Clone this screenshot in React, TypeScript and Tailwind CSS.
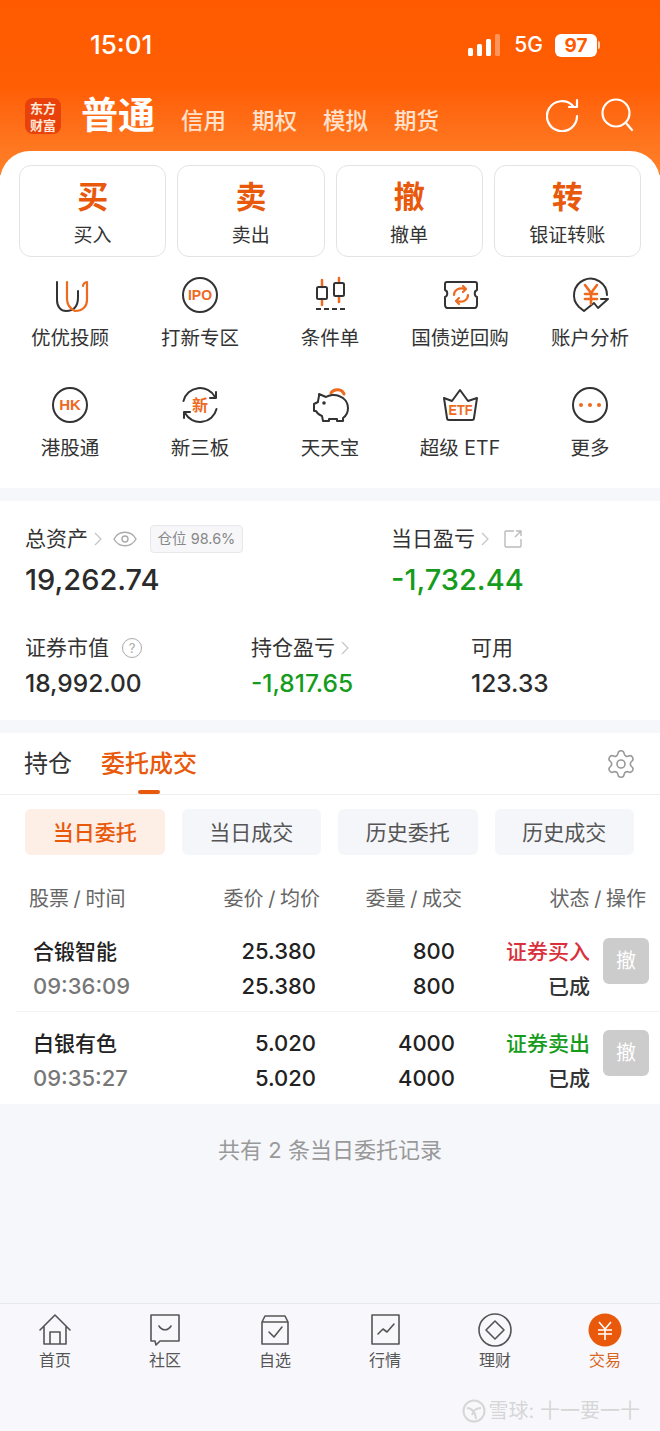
import { ReactNode } from 'react'
import { Settings } from 'lucide-react'

const orange = '#e8590c'

const stroke = { fill: 'none', stroke: '#333', strokeWidth: 2, strokeLinecap: 'round' as const, strokeLinejoin: 'round' as const }
const accent = { fill: 'none', stroke: '#ee6a1f', strokeWidth: 2.2, strokeLinecap: 'round' as const, strokeLinejoin: 'round' as const }

function Icon({ children }: { children: ReactNode }) {
  return (
    <svg viewBox="0 0 40 40" className="w-10 h-10">
      {children}
    </svg>
  )
}

const BadgeText = ({ children, size = 13 }: { children: string; size?: number }) => (
  <text x="20" y="20" dy="0.36em" textAnchor="middle" fontSize={size} fontWeight="700" fill="#ee6a1f" fontFamily="'Liberation Sans', 'Noto Sans CJK SC', sans-serif">
    {children}
  </text>
)

const menuIcons: Record<string, ReactNode> = {
  u: (
    <Icon>
      <path d="M7 7v18c0 7 4 11 9 11 7 0 12-4 12-14v-6" {...stroke} />
      <path d="M17 7v17c0 6 4 10 8 12 8 0 12-5 12-11V7c-2 0-4 2-4 4" {...accent} />
    </Icon>
  ),
  ipo: (
    <Icon>
      <circle cx="20" cy="20" r="17" {...stroke} />
      <BadgeText size={14}>IPO</BadgeText>
    </Icon>
  ),
  cond: (
    <Icon>
      <path d="M12 5v7M12 24v6M29 3v5M29 21v6" {...accent} strokeWidth={2.5} />
      <rect x="7" y="12" width="10" height="12" rx="1.500" {...stroke} />
      <rect x="24" y="8" width="10" height="13" rx="1.500" {...stroke} />
      <path d="M6 34h30" {...stroke} strokeDasharray="5 3" strokeLinecap="butt" />
    </Icon>
  ),
  bond: (
    <Icon>
      <path d="M7 7h28c1 0 2 1 2 2v6c-3 1-3 6 0 7v8c0 1-1 3-2 3H7c-1 0-2-2-2-3v-8c3-1 3-6 0-7V9c0-1 1-2 2-2z" {...stroke} />
      <path d="M14 20c0-5 5-8 11-6M28 20c0 5-5 8-11 6" {...accent} />
      <path d="M23 11l3 3-3 3M19 23l-3 3 3 3" {...accent} />
    </Icon>
  ),
  account: (
    <Icon>
      <path d="M37 20A16.500 16.500 0 1 0 9 32l5 4 10-8 4 5 10-9h-7" {...stroke} />
      <path d="M15 10l6 8 6-8M21 18v11M15 19h12M15 24h12" {...accent} strokeWidth={2.6} />
    </Icon>
  ),
  hk: (
    <Icon>
      <circle cx="20" cy="20" r="17" {...stroke} />
      <BadgeText size={15}>HK</BadgeText>
    </Icon>
  ),
  three: (
    <Icon>
      <path d="M3.500 16A17 17 0 0 1 35 12M36.500 24A17 17 0 0 1 5 28" {...stroke} />
      <path d="M36 7v6h-6M4 33v-6h6" {...stroke} />
      <BadgeText size={16}>新</BadgeText>
    </Icon>
  ),
  pig: (
    <Icon>
      <path d="M21 8a7 6 0 0 1 13 1" {...accent} strokeWidth={3} />
      <path d="M9 9l7 3c3-2 9-3 13-1 6 2 9 7 9 12 0 4-2 8-5 10v3h-6v-2h-8v2h-6l-1-5c-3-1-5-3-6-5H4v-7l4-2c0-2 1-5 1-6z" {...stroke} />
      <circle cx="14" cy="18" r="1.800" fill="#333" />
    </Icon>
  ),
  etf: (
    <Icon>
      <path d="M4 13l8 3 8-11 8 11 9-3-3 20c0 1-1 2-2 2H9c-1 0-2-1-2-2z" {...stroke} />
      <text x="20.500" y="30" textAnchor="middle" fontSize="15" fontWeight="700" fill="#ee6a1f" textLength={24} lengthAdjust="spacingAndGlyphs" fontFamily="'Liberation Sans', sans-serif">
        ETF
      </text>
    </Icon>
  ),
  more: (
    <Icon>
      <circle cx="20" cy="20" r="17" {...stroke} />
      <circle cx="11" cy="20" r="2" fill="#ee6a1f" />
      <circle cx="20" cy="20" r="2" fill="#ee6a1f" />
      <circle cx="29" cy="20" r="2" fill="#ee6a1f" />
    </Icon>
  ),
}

const actions = [
  { big: '买', small: '买入' },
  { big: '卖', small: '卖出' },
  { big: '撤', small: '撤单' },
  { big: '转', small: '银证转账' },
]

const menus = [
  { icon: 'u', label: '优优投顾' },
  { icon: 'ipo', label: '打新专区' },
  { icon: 'cond', label: '条件单' },
  { icon: 'bond', label: '国债逆回购' },
  { icon: 'account', label: '账户分析' },
  { icon: 'hk', label: '港股通' },
  { icon: 'three', label: '新三板' },
  { icon: 'pig', label: '天天宝' },
  { icon: 'etf', label: '超级 ETF' },
  { icon: 'more', label: '更多' },
]

const orders = [
  { name: '合锻智能', time: '09:36:09', price: '25.380', qty: '800', type: '证券买入', typeClass: 'text-[#d9303c]' },
  { name: '白银有色', time: '09:35:27', price: '5.020', qty: '4000', type: '证券卖出', typeClass: 'text-[#169c1c]' },
]

const Chevron = () => (
  <svg viewBox="0 0 8 14" className="w-2 h-3.5 ml-1.5">
    <path d="M1 1l6 6-6 6" fill="none" stroke="#c4c4c4" strokeWidth="1.2" />
  </svg>
)

const navLine = { fill: 'none', stroke: '#555', strokeWidth: 1.6, strokeLinejoin: 'round' as const, strokeLinecap: 'round' as const }

const navItems: { label: string; active?: boolean; icon: ReactNode }[] = [
  {
    label: '首页',
    icon: <path d="M3 17L18 2l15 15M7 14v17h22V14M13 31V19h10v12" {...navLine} />,
  },
  {
    label: '社区',
    icon: <path d="M4 2h28v26H13l-4 4-1-4H4zM12 13c3 5 9 5 12 0" {...navLine} />,
  },
  {
    label: '自选',
    icon: <path d="M5 9l3-6h20l3 6M5 9h26v22H5zM12 19l5 5 8-10" {...navLine} />,
  },
  {
    label: '行情',
    icon: <path d="M5 2h27v29H5zM11 21l5-5 4 3 7-8" {...navLine} />,
  },
  {
    label: '理财',
    icon: (
      <>
        <circle cx="18" cy="17" r="16" {...navLine} />
        <path d="M18 8l9 9-9 9-9-9z" {...navLine} />
      </>
    ),
  },
  {
    label: '交易',
    active: true,
    icon: (
      <>
        <circle cx="18" cy="17" r="16.500" fill={orange} />
        <path d="M12 9l6 7 6-7M18 16v11M11 17h14M11 21h14" fill="none" stroke="#fff" strokeWidth="1.6" />
      </>
    ),
  },
]

export default function App() {
  return (
    <div
      className="w-[660px] h-[1431px] overflow-hidden bg-[#f5f7fb] text-[#333] flex flex-col"
      style={{ fontFamily: "Inter, 'Noto Sans CJK SC', sans-serif" }}
    >
      {/* 顶部 */}
      <div className="h-[175px] shrink-0 bg-gradient-to-b from-[#ff5a00] via-[#ff5e04] to-[#ff8128] text-white">
        <div className="h-[90px] pt-[29px] pl-[90px] pr-[60px] flex items-start justify-between">
          <span className="text-[26px] leading-[32px] font-medium">15:01</span>
          <div className="flex items-center h-[32px]">
            <svg viewBox="0 0 32 22" className="w-8 h-[22px] mr-[14px]">
              <rect x="0" y="14" width="5" height="8" rx="1.500" fill="#fff" />
              <rect x="9" y="10" width="5" height="12" rx="1.500" fill="#fff" />
              <rect x="18" y="5" width="5" height="17" rx="1.500" fill="#fff" />
              <rect x="27" y="0" width="5" height="22" rx="1.500" fill="#fff" fillOpacity="0.35" />
            </svg>
            <span className="text-[21px] font-medium mr-[12px]">5G</span>
            <span className="w-[42px] h-[23px] bg-white rounded-[6px] text-[#ff5a00] text-[19px] leading-[23px] font-bold text-center">97</span>
            <span className="w-[2px] h-[8px] bg-white/70 rounded-r ml-[1px]" />
          </div>
        </div>
        <div className="flex items-end pl-[25px] pr-[26px] h-[46px]">
          <div
            className="w-[36px] h-[36px] rounded-[8px] bg-[#e8410c] text-[#ffe9d8] text-[13px] font-bold flex items-center justify-center mb-[2px]"
            style={{ fontFamily: "'Noto Sans CJK SC', serif" }}
          >
            <div className="text-center leading-[17px]">
              <div>东方</div>
              <div>财富</div>
            </div>
          </div>
          <span className="ml-[20px] text-[37px] leading-[44px] font-bold mb-[-2px]">普通</span>
          <div className="ml-[26px] flex gap-[26px] text-[22.5px] leading-[34px] font-medium text-[#ffe1cc] mb-[-2px]">
            <span>信用</span>
            <span>期权</span>
            <span>模拟</span>
            <span>期货</span>
          </div>
          <div className="ml-auto flex items-center gap-[20px] mb-[4px]">
            <svg viewBox="0 0 34 34" className="w-[34px] h-[34px]">
              <path d="M27 8a15 15 0 1 0 4 10" fill="none" stroke="#fff" strokeWidth="2.2" strokeLinecap="round" />
              <path d="M31 2v7h-8" fill="none" stroke="#fff" strokeWidth="2.2" strokeLinecap="round" strokeLinejoin="round" />
            </svg>
            <svg viewBox="0 0 34 34" className="w-[34px] h-[34px]">
              <circle cx="16" cy="15" r="13.500" fill="none" stroke="#fff" strokeWidth="2.2" />
              <path d="M26 25l6 7" fill="none" stroke="#fff" strokeWidth="2.2" strokeLinecap="round" />
            </svg>
          </div>
        </div>
      </div>

      {/* 快捷操作 */}
      <div className="relative mt-[-24px] bg-white rounded-t-[30px] pt-[14px] h-[337px] shrink-0">
        <div className="grid grid-cols-4 gap-[11px] pl-[19px] pr-[19px]">
          {actions.map((a) => (
            <div key={a.big} className="h-[92px] rounded-[12px] border border-[#e3e3e3] flex flex-col items-center pt-[10px]">
              <span className="text-[31px] leading-[42px] font-bold text-[#e8590c]">{a.big}</span>
              <span className="mt-[4px] text-[19px] leading-[28px] text-[#333]">{a.small}</span>
            </div>
          ))}
        </div>
        <div className="grid grid-cols-5 pl-[5px] pr-[5px] mt-[18px] gap-y-[50px]">
          {menus.map((m) => (
            <div key={m.label} className="h-[60px] flex flex-col items-center">
              <div className="h-[40px]">{menuIcons[m.icon]}</div>
              <span className="mt-[9px] text-[19.5px] leading-[28px] whitespace-nowrap">{m.label}</span>
            </div>
          ))}
        </div>
      </div>

      {/* 资产 */}
      <div className="mt-[13px] h-[219px] shrink-0 bg-white pl-[25px] pt-[24px]">
        <div className="flex">
          <div className="w-[366px]">
            <div className="flex items-center h-[28px] text-[21px] text-[#333]">
              总资产
              <Chevron />
              <svg viewBox="0 0 24 16" className="w-6 h-4 ml-[11px]">
                <path d="M1 8c5-9 17-9 22 0-5 9-17 9-22 0z" fill="none" stroke="#aaa" strokeWidth="1.4" />
                <circle cx="12" cy="8" r="3" fill="none" stroke="#aaa" strokeWidth="1.4" />
              </svg>
              <span className="ml-[13px] h-[28px] w-[93px] rounded-[4px] border border-[#e8e8ec] bg-[#f7f7fa] text-[14.5px] leading-[26px] text-center text-[#888]">
                仓位 98.6%
              </span>
            </div>
            <div className="mt-[9px] text-[29px] leading-[36px] font-medium text-[#2b2b2b]">19,262.74</div>
          </div>
          <div>
            <div className="flex items-center h-[28px] text-[21px] text-[#333]">
              当日盈亏
              <Chevron />
              <svg viewBox="0 0 18 18" className="w-[18px] h-[18px] ml-[15px]">
                <path d="M10 1H2a1 1 0 0 0-1 1v14a1 1 0 0 0 1 1h14a1 1 0 0 0 1-1V9M11 7l6-6M12 1h5v5" fill="none" stroke="#bbb" strokeWidth="1.4" />
              </svg>
            </div>
            <div className="mt-[9px] text-[29px] leading-[36px] font-medium text-[#169c1c]">-1,732.44</div>
          </div>
        </div>
        <div className="flex mt-[36px]">
          <div className="w-[226px]">
            <div className="flex items-center h-[28px] text-[21px]">
              证券市值
              <span className="ml-[13px] w-[20px] h-[20px] rounded-full border border-[#aaa] text-[13px] leading-[18px] text-center text-[#aaa]">?</span>
            </div>
            <div className="mt-[4px] text-[24.5px] leading-[34px] font-medium text-[#2b2b2b]">18,992.00</div>
          </div>
          <div className="w-[220px]">
            <div className="flex items-center h-[28px] text-[21px]">
              持仓盈亏
              <Chevron />
            </div>
            <div className="mt-[4px] text-[24.5px] leading-[34px] font-medium text-[#169c1c]">-1,817.65</div>
          </div>
          <div>
            <div className="h-[28px] text-[21px] leading-[28px]">可用</div>
            <div className="mt-[4px] text-[24.5px] leading-[34px] font-medium text-[#2b2b2b]">123.33</div>
          </div>
        </div>
      </div>

      {/* 委托 */}
      <div className="mt-[13px] h-[371px] shrink-0 bg-white">
        <div className="relative h-[62px] flex items-center pl-[24px] pr-[23px] border-b border-[#eeeeee] text-[24px]">
          <span>持仓</span>
          <span className="ml-[29px] font-medium text-[#e8590c]">委托成交</span>
          <span className="absolute left-[138px] bottom-0 w-[22px] h-[4px] rounded-full bg-[#e8590c]" />
          <Settings className="ml-auto text-[#999]" size={32} strokeWidth={1.2} />
        </div>
        <div className="mt-[14px] pl-[25px] pr-[26px] grid grid-cols-4 gap-[17px]">
          {['当日委托', '当日成交', '历史委托', '历史成交'].map((t, i) => (
            <div
              key={t}
              className={`h-[46px] rounded-[6px] text-[21px] leading-[48px] text-center ${
                i === 0 ? 'bg-[#fdeee6] text-[#e8590c] font-medium' : 'bg-[#f5f6fa] text-[#555]'
              }`}
            >
              {t}
            </div>
          ))}
        </div>
        <div className="mt-[30px] flex text-[20px] leading-[28px] text-[#666] [word-spacing:-1px]">
          <span className="w-[320px] pl-[29px] flex justify-between">
            <span>股票 / 时间</span>
            <span>委价 / 均价</span>
          </span>
          <span className="w-[142px] text-right">委量 / 成交</span>
          <span className="w-[184px] text-right">状态 / 操作</span>
        </div>
        <div className="mt-[7px]">
          {orders.map((o, i) => (
            <div key={o.name} className={`h-[92px] ml-[16px] flex text-[22px] leading-[35px] ${i === 0 ? 'border-b border-[#f4f4f4]' : ''}`}>
              <div className="w-[300px] pl-[17px] pt-[14px] flex justify-between">
                <div>
                  <div className="text-[21px] text-[#222] font-medium">{o.name}</div>
                  <div className="text-[#777] font-medium">{o.time}</div>
                </div>
                <div className="text-right text-[#222] font-medium">
                  <div>{o.price}</div>
                  <div>{o.price}</div>
                </div>
              </div>
              <div className="w-[139px] pt-[14px] text-right text-[#222] font-medium">
                <div>{o.qty}</div>
                <div>{o.qty}</div>
              </div>
              <div className="w-[135px] pt-[14px] text-right text-[21px] font-medium text-[#333]">
                <div className={o.typeClass}>{o.type}</div>
                <div>已成</div>
              </div>
              <div className="ml-[13px] mt-[18px] w-[46px] h-[46px] rounded-[6px] bg-[#cccccc] text-white text-[20px] leading-[46px] text-center">
                撤
              </div>
            </div>
          ))}
        </div>
      </div>

      {/* 记录数 */}
      <div className="h-[199px] shrink-0 pt-[30px] text-center text-[22px] leading-[32px] text-[#999]">共有 2 条当日委托记录</div>

      {/* 底部导航 */}
      <div className="relative flex-1 bg-[#f8f8fc] border-t border-[#e8e8ea]">
        <div className="grid grid-cols-6 pt-[9px]">
          {navItems.map((n) => (
            <div key={n.label} className="flex flex-col items-center">
              <svg viewBox="0 0 36 34" className="w-9 h-[34px]">
                {n.icon}
              </svg>
              <span className={`mt-[2px] text-[16px] leading-[22px] ${n.active ? 'text-[#d9661c]' : 'text-[#555]'}`}>{n.label}</span>
            </div>
          ))}
        </div>
        <div className="absolute right-[20px] bottom-[7px] flex items-center text-[20px] leading-[26px] text-[#d6d6d6]">
          <svg viewBox="0 0 24 24" className="w-6 h-6 mr-[3px]">
            <circle cx="12" cy="12" r="10.500" fill="none" stroke="#d6d6d6" strokeWidth="2" />
            <path d="M5 9c5 0 9 5 9 11M19 9c-5 0-8 3-9 7" fill="none" stroke="#d6d6d6" strokeWidth="2" />
          </svg>
          雪球: 十一要一十
        </div>
      </div>
    </div>
  )
}
